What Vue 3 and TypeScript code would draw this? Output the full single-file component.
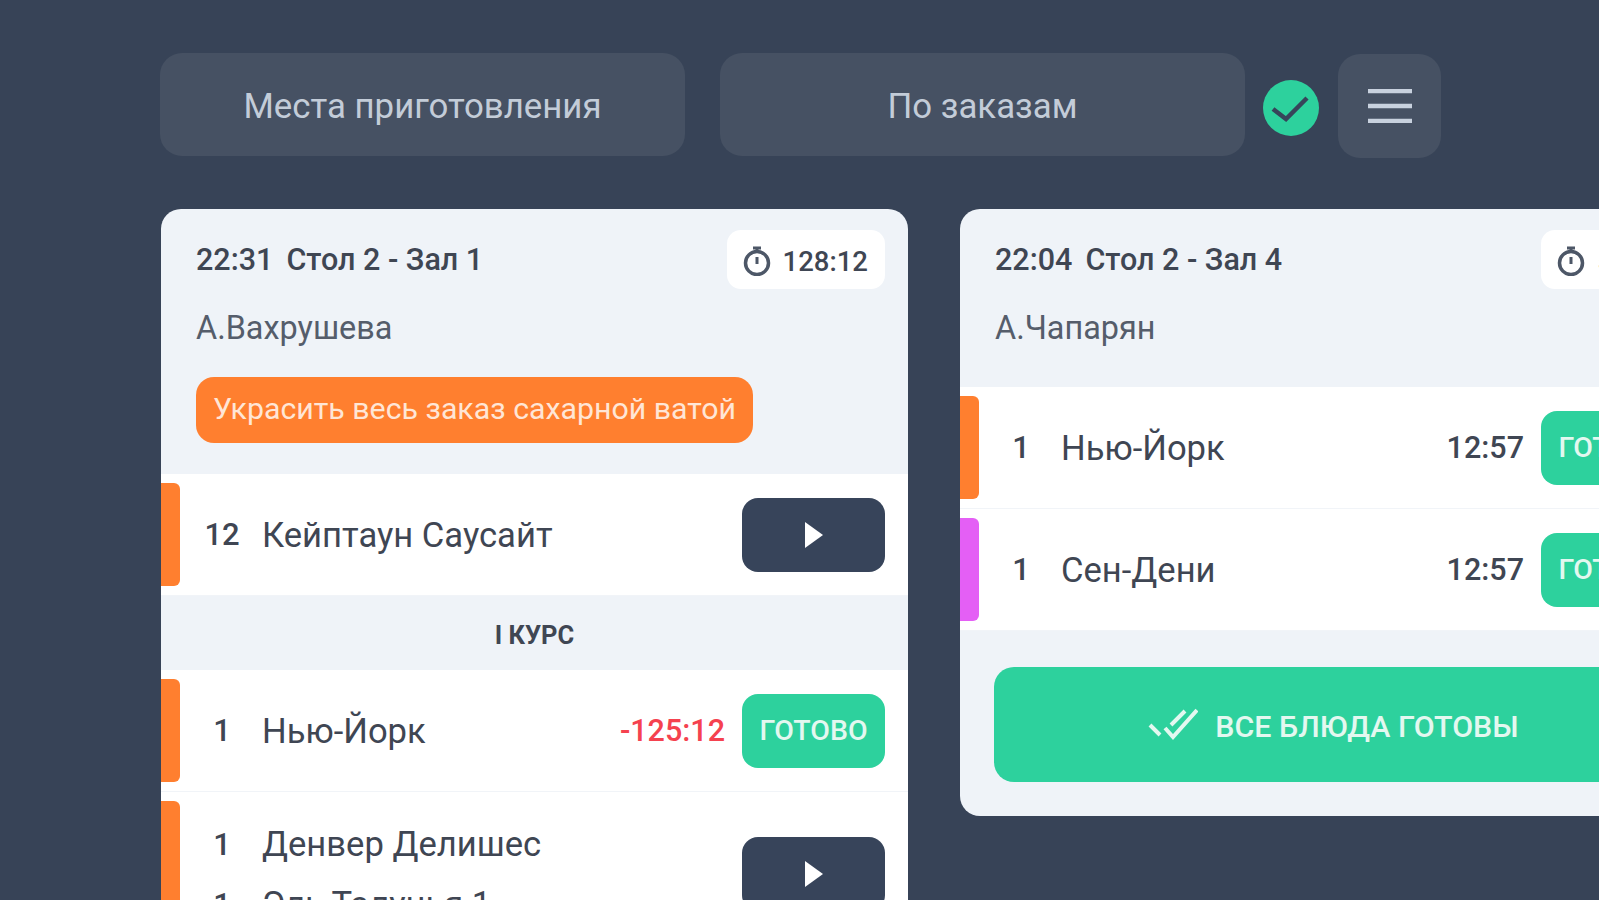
<template>
  <div class="page">
    <div class="top-bar">
      <button class="top-btn">Места приготовления</button>
      <button class="top-btn">По заказам</button>
      <svg class="status" viewBox="0 0 56 56">
        <circle cx="28" cy="28" r="28" fill="#2dd19d" />
        <path d="M10 29l13 10 21-21" fill="none" stroke="#37445a" stroke-width="4.5" />
      </svg>
      <button class="menu-btn">
        <svg width="44" height="34" viewBox="0 0 44 34">
          <path d="M0 2h44M0 17h44M0 32h44" stroke="#c8d1de" stroke-width="4.5" />
        </svg>
      </button>
    </div>

    <div class="orders">
      <div class="card" v-for="order in orders" :key="order.id">
        <div class="card-head">
          <div class="head-top">
            <div class="title"><span class="clock">{{ order.time }}</span>{{ order.table }}</div>
            <div class="timer">
              <svg class="timer-icon" width="30" height="30" viewBox="0 0 30 30">
                <circle cx="15" cy="17" r="11.5" fill="none" stroke="#4d5767" stroke-width="3.5" />
                <path d="M11 2h8M15 2v4M15 11v7" fill="none" stroke="#4d5767" stroke-width="3" />
              </svg>
              {{ order.timer }}
            </div>
          </div>
          <div class="waiter">{{ order.waiter }}</div>
          <div class="note" v-if="order.note">{{ order.note }}</div>
        </div>

        <template v-for="(block, i) in order.blocks" :key="i">
          <div class="course" v-if="block.course">{{ block.course }}</div>
          <div class="row" v-for="row in block.rows" :key="row.id">
            <span class="bar" :style="{ background: row.color }"></span>
            <div class="dishes">
              <div class="dish" v-for="dish in row.dishes" :key="dish.name">
                <span class="qty">{{ dish.qty }}</span>
                <span class="name">{{ dish.name }}</span>
              </div>
            </div>
            <span class="left-time" :class="{ late: row.late }" v-if="row.left">{{ row.left }}</span>
            <button class="action ready" v-if="row.ready">ГОТОВО</button>
            <button class="action play" v-else>
              <svg width="18" height="26" viewBox="0 0 18 26"><path d="M0 0l18 13L0 26z" fill="#fff" /></svg>
            </button>
          </div>
        </template>

        <div class="card-foot" v-if="order.allReady">
          <button class="all-ready">
            <svg class="all-ready-icon" width="50" height="34" viewBox="0 0 50 34">
              <path d="M2 19l10 10M17 22l8 9L49 4M23 19L37 5" fill="none" stroke="#e3f8f0" stroke-width="4" />
            </svg>
            ВСЕ БЛЮДА ГОТОВЫ
          </button>
        </div>
      </div>
    </div>
  </div>
</template>

<script setup lang="ts">
interface Dish {
  qty: number;
  name: string;
}

interface Row {
  id: number;
  color: string;
  dishes: Dish[];
  left?: string;
  late?: boolean;
  ready?: boolean;
}

interface Block {
  course?: string;
  rows: Row[];
}

interface Order {
  id: number;
  time: string;
  table: string;
  timer: string;
  waiter: string;
  note?: string;
  blocks: Block[];
  allReady?: boolean;
}

const orange = '#ff7f2f';
const pink = '#e45ff5';

const orders: Order[] = [
  {
    id: 1,
    time: '22:31',
    table: 'Стол 2 - Зал 1',
    timer: '128:12',
    waiter: 'А.Вахрушева',
    note: 'Украсить весь заказ сахарной ватой',
    blocks: [
      { rows: [{ id: 1, color: orange, dishes: [{ qty: 12, name: 'Кейптаун Саусайт' }] }] },
      {
        course: 'I КУРС',
        rows: [
          { id: 2, color: orange, dishes: [{ qty: 1, name: 'Нью-Йорк' }], left: '-125:12', late: true, ready: true },
          {
            id: 3,
            color: orange,
            dishes: [
              { qty: 1, name: 'Денвер Делишес' },
              { qty: 1, name: 'Эль Талунья 1' },
            ],
          },
        ],
      },
    ],
  },
  {
    id: 2,
    time: '22:04',
    table: 'Стол 2 - Зал 4',
    timer: '55:12',
    waiter: 'А.Чапарян',
    blocks: [
      {
        rows: [
          { id: 1, color: orange, dishes: [{ qty: 1, name: 'Нью-Йорк' }], left: '12:57', ready: true },
          { id: 2, color: pink, dishes: [{ qty: 1, name: 'Сен-Дени' }], left: '12:57', ready: true },
        ],
      },
    ],
    allReady: true,
  },
];
</script>

<style>
html,
body {
  height: 100%;
  overflow: hidden;
  background: #374357;
}
</style>

<style scoped>
.page {
  height: 900px;
  overflow: hidden;
  padding: 53px 0 0 160px;
  box-sizing: border-box;
  background: #374357;
  font-family: Roboto, "Noto Sans", sans-serif;
  color: #3f4653;
}

button {
  border: none;
  font-family: inherit;
  padding: 0;
}

.top-bar {
  display: flex;
  align-items: flex-start;
  height: 103px;
}

.top-btn {
  width: 525px;
  height: 103px;
  padding-top: 2px;
  margin-right: 35px;
  border-radius: 22px;
  background: #465163;
  color: #c3ccd8;
  font-size: 34.8px;
}

.top-btn:nth-child(2) {
  margin-right: 18px;
}

.status {
  width: 56px;
  height: 56px;
  margin: 27px 19px 0 0;
}

.menu-btn {
  width: 103px;
  height: 104px;
  margin-top: 1px;
  border-radius: 22px;
  background: #465163;
  display: flex;
  align-items: center;
  justify-content: center;
}

.orders {
  display: flex;
  align-items: flex-start;
  gap: 52px;
  margin: 53px 0 0 1px;
}

.card {
  width: 747px;
  flex-shrink: 0;
  border-radius: 20px;
  background: #eff3f8;
  overflow: hidden;
}

.card-head {
  padding: 21px 23px 31px 35px;
}

.head-top {
  display: flex;
  justify-content: space-between;
  align-items: center;
  height: 59px;
}

.title {
  font-size: 30.5px;
  font-weight: 500;
}

.clock {
  margin-right: 13px;
}

.timer {
  display: flex;
  align-items: center;
  height: 59px;
  box-sizing: border-box;
  padding: 3px 17px 0 15px;
  border-radius: 14px;
  background: #fff;
  font-size: 27.5px;
  font-weight: 500;
}

.timer-icon {
  margin-right: 11px;
}

.waiter {
  margin: 19px 0 8px;
  line-height: 40px;
  font-size: 32.4px;
  color: #555d6b;
}

.note {
  display: inline-block;
  margin-top: 21px;
  height: 66px;
  line-height: 64px;
  padding: 0 17px;
  border-radius: 18px;
  background: #ff7f2f;
  color: #ffe6d6;
  font-size: 30.3px;
}

.course {
  height: 74px;
  line-height: 78px;
  text-align: center;
  font-size: 25.5px;
  font-weight: 700;
}

.row {
  display: flex;
  align-items: center;
  min-height: 121px;
  background: #fff;
  border-bottom: 1px solid #f1f4f8;
  padding-right: 23px;
}

.bar {
  align-self: stretch;
  width: 19px;
  margin: 9px 0;
  border-radius: 0 6px 6px 0;
  flex-shrink: 0;
}

.dishes {
  flex: 1;
  padding: 22px 0;
}

.dish {
  display: flex;
  align-items: center;
  height: 60px;
}

.qty {
  width: 60px;
  margin: 0 10px 0 12px;
  text-align: center;
  font-size: 31px;
  font-weight: 500;
}

.name {
  font-size: 34.6px;
}

.left-time {
  margin-right: 17px;
  font-size: 30.5px;
  font-weight: 500;
}

.late {
  color: #f5424f;
}

.action {
  width: 143px;
  height: 74px;
  border-radius: 16px;
  flex-shrink: 0;
}

.ready {
  background: #2dd19d;
  color: #e3f8f0;
  font-size: 28.5px;
  font-weight: 500;
}

.play {
  background: #37445a;
  display: flex;
  align-items: center;
  justify-content: center;
}

.card-foot {
  padding: 36px 34px 34px 34px;
}

.all-ready {
  display: flex;
  align-items: center;
  justify-content: center;
  gap: 17px;
  width: 100%;
  height: 115px;
  padding-top: 3px;
  border-radius: 20px;
  background: #2dd19d;
  color: #e3f8f0;
  font-size: 30.4px;
  font-weight: 500;
}

.all-ready-icon {
  margin-top: -6px;
}
</style>
